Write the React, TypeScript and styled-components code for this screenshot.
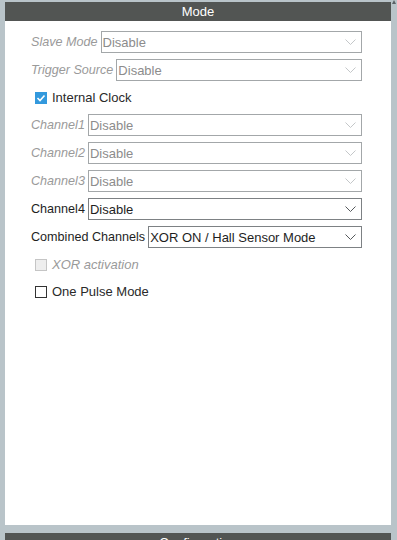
import React from "react"
import styled, { createGlobalStyle } from "styled-components"

const GlobalStyle = createGlobalStyle`
    html, body {
        margin: 0;
        padding: 0;
        background: #b9c4c9;
        font-family: "Liberation Sans", Arial, sans-serif;
        overflow: hidden;
    }
`

const Page = styled.div`
    position: relative;
    width: 397px;
    height: 540px;
    padding: 2px 6px 0 5px;
    box-sizing: border-box;
    display: flex;
    flex-direction: column;
    gap: 8px;
    overflow: hidden;
`

/* scrollbar arrow peeking at the top right */
const ScrollArrow = styled.div`
    position: absolute;
    top: 0;
    right: 1px;
    width: 0;
    height: 0;
    border-left: 2px solid transparent;
    border-right: 2px solid transparent;
    border-bottom: 4px solid #5a6166;
`

const Panel = styled.section`
    display: flex;
    flex-direction: column;
    flex-shrink: 0;
`

const PanelHeader = styled.div`
    height: 19px;
    background: #525553;
    color: #ffffff;
    font-size: 13px;
    line-height: 19px;
    text-align: center;
`

const PanelBody = styled.div`
    height: 504px;
    background: #ffffff;
    padding: 10px 29px 0 26px;
    box-sizing: border-box;
    display: flex;
    flex-direction: column;
    gap: 6px;
`

const SelectRow = styled.div`
    display: flex;
    align-items: center;
    gap: 3px;
    height: 22px;
`

const Label = styled.span<{ $disabled?: boolean }>`
    font-size: 12.6px;
    white-space: nowrap;
    color: ${({ $disabled }) => ($disabled ? "#9a9a9a" : "#1e1e1e")};
    font-style: ${({ $disabled }) => ($disabled ? "italic" : "normal")};
`

const SelectBox = styled.div<{ $disabled?: boolean }>`
    flex: 1;
    height: 22px;
    box-sizing: border-box;
    border: 1px solid ${({ $disabled }) => ($disabled ? "#a3a7a9" : "#7d8184")};
    display: flex;
    align-items: center;
    justify-content: space-between;
    padding: 0 5px 0 1px;
    font-size: 13px;
    color: ${({ $disabled }) => ($disabled ? "#8c8c8c" : "#1e1e1e")};
`

const CheckRow = styled.label<{ $disabled?: boolean }>`
    display: flex;
    align-items: center;
    gap: 5px;
    height: 21px;
    padding-left: 4px;
    font-size: 13px;
    color: ${({ $disabled }) => ($disabled ? "#9a9a9a" : "#2a2a2a")};
    font-style: ${({ $disabled }) => ($disabled ? "italic" : "normal")};
`

const Box = styled.span<{ $checked?: boolean; $disabled?: boolean }>`
    width: 12px;
    height: 12px;
    box-sizing: border-box;
    display: flex;
    align-items: center;
    justify-content: center;
    background: ${({ $checked, $disabled }) =>
        $checked ? "#3399dd" : $disabled ? "#eeeeee" : "#ffffff"};
    border: 1px solid
        ${({ $checked, $disabled }) =>
            $checked ? "#3399dd" : $disabled ? "#c5c5c5" : "#333333"};
`

function Chevron({ disabled }: { disabled?: boolean }) {
    return (
        <svg width="11" height="6" viewBox="0 0 11 6">
            <path
                d="M0.5 0.5 L5.5 5.5 L10.5 0.5"
                fill="none"
                stroke={disabled ? "#c4c7c9" : "#55595c"}
                strokeWidth="1"
            />
        </svg>
    )
}

function Select({
    label,
    value,
    disabled,
}: {
    label: string
    value: string
    disabled?: boolean
}) {
    return (
        <SelectRow>
            <Label $disabled={disabled}>{label}</Label>
            <SelectBox $disabled={disabled}>
                <span>{value}</span>
                <Chevron disabled={disabled} />
            </SelectBox>
        </SelectRow>
    )
}

function Check({
    label,
    checked,
    disabled,
}: {
    label: string
    checked?: boolean
    disabled?: boolean
}) {
    return (
        <CheckRow $disabled={disabled}>
            <Box $checked={checked} $disabled={disabled}>
                {checked ? (
                    <svg width="10" height="10" viewBox="0 0 10 10">
                        <path
                            d="M1.5 5 L4 7.5 L8.5 2.5"
                            fill="none"
                            stroke="#ffffff"
                            strokeWidth="1.6"
                        />
                    </svg>
                ) : null}
            </Box>
            <span>{label}</span>
        </CheckRow>
    )
}

export default function App() {
    return (
        <>
            <GlobalStyle />
            <Page>
                <ScrollArrow />
                <Panel>
                    <PanelHeader>Mode</PanelHeader>
                    <PanelBody>
                        <Select label="Slave Mode" value="Disable" disabled />
                        <Select label="Trigger Source" value="Disable" disabled />
                        <Check label="Internal Clock" checked />
                        <Select label="Channel1" value="Disable" disabled />
                        <Select label="Channel2" value="Disable" disabled />
                        <Select label="Channel3" value="Disable" disabled />
                        <Select label="Channel4" value="Disable" />
                        <Select
                            label="Combined Channels"
                            value="XOR ON / Hall Sensor Mode"
                        />
                        <Check label="XOR activation" disabled />
                        <Check label="One Pulse Mode" />
                    </PanelBody>
                </Panel>
                <Panel>
                    <PanelHeader>Configuration</PanelHeader>
                </Panel>
            </Page>
        </>
    )
}
